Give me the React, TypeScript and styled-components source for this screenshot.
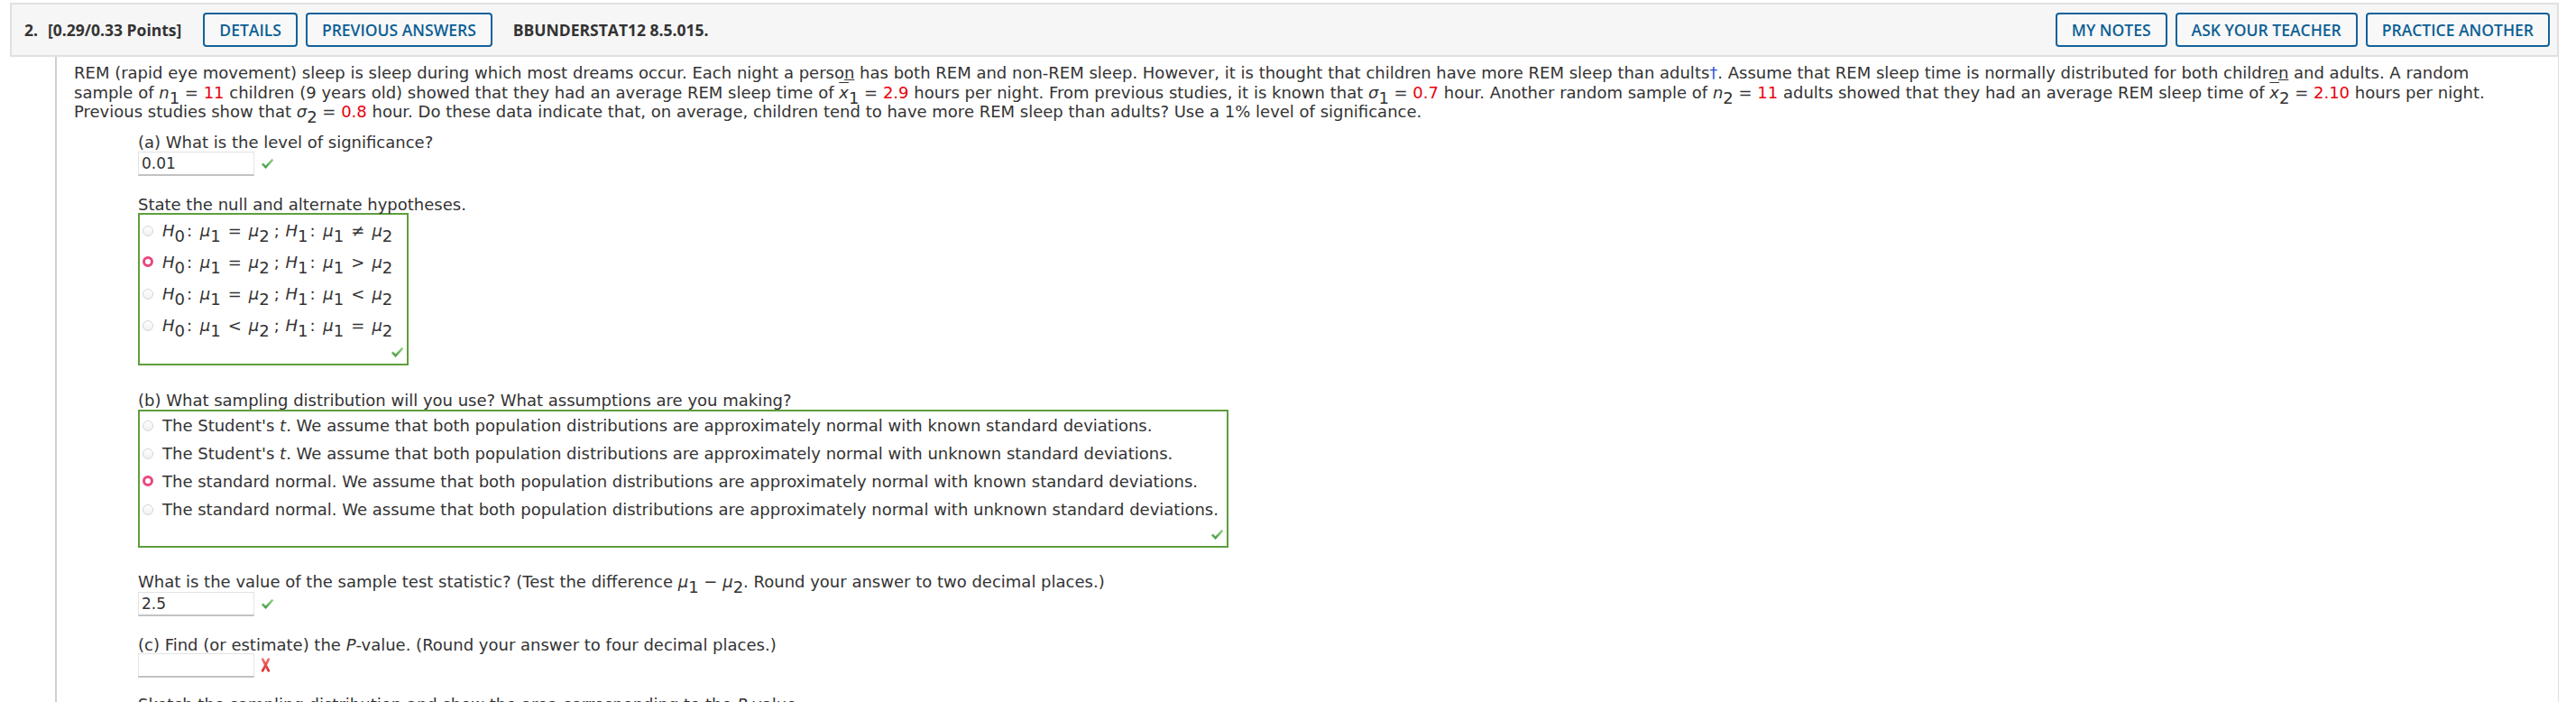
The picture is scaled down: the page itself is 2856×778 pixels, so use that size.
import React from 'react'
import styled, { createGlobalStyle, css } from 'styled-components'

const GlobalStyle = createGlobalStyle`
  html, body {
    margin: 0;
    padding: 0;
    background: #fff;
  }
  body {
    font-family: "DejaVu Sans", Verdana, sans-serif;
    font-size: 18px;
    color: #333;
  }
`

const Page = styled.div`
  box-sizing: border-box;
  height: 778px;
  overflow: hidden;
  padding: 3px 19px 0 11px;
`

const QuestionHeader = styled.div`
  display: flex;
  align-items: center;
  justify-content: space-between;
  box-sizing: border-box;
  height: 60px;
  padding: 0 8px 0 14px;
  background: #f6f6f6;
  border: 2px solid #e0e0e0;
  font-family: "Open Sans", "Liberation Sans", sans-serif;
`

const HeaderGroup = styled.div`
  display: flex;
  align-items: center;
  gap: 9px;
`

const QuestionTitle = styled.div`
  font-size: 17.5px;
  font-weight: 700;
  color: #333;
  margin-right: 15px;

  span {
    margin-left: 11px;
  }
`

const Code = styled.div`
  font-size: 17.5px;
  font-weight: 700;
  color: #333;
  margin-left: 14px;
`

const HeaderButton = styled.button`
  box-sizing: border-box;
  height: 38px;
  padding: 0 16px;
  border: 2px solid #13629a;
  border-radius: 4px;
  background: #f8f8f8;
  color: #0c5f95;
  font-family: "Open Sans", "Liberation Sans", sans-serif;
  font-size: 17.5px;
  font-weight: 600;
  cursor: pointer;
`

const QuestionBody = styled.div`
  margin-left: 50px;
  border-left: 2px solid #cfcfcf;
  border-right: 1px solid #dedede;
  padding: 7px 40px 40px 19px;
`

const Prompt = styled.p`
  margin: 0;
  line-height: 21.5px;
`

const Red = styled.span`
  color: #e8000b;
`

const Dagger = styled.span`
  color: #2b55d6;
`

const I = styled.i`
  font-style: italic;
`

const Sub = styled.span`
  font-style: normal;
  vertical-align: -0.35em;
  line-height: 0;
`

const Bar = styled.i`
  font-style: italic;
  text-decoration: overline;
  text-decoration-thickness: 1px;
`

const Op = styled.span`
  margin: 0 0.45em;
`

const Colon = styled.span`
  margin: 0 0.48em 0 0.11em;
`

const Semi = styled.span`
  margin: 0 0.38em 0 0.27em;
`

const Part = styled.div`
  margin-left: 71px;
`

const Label = styled.div<{ $mt: number }>`
  margin-top: ${(p) => p.$mt}px;
  line-height: 18px;
`

const AnswerRow = styled.div<{ $mt: number }>`
  display: flex;
  align-items: center;
  gap: 7px;
  margin-top: ${(p) => p.$mt}px;
`

const AnswerInput = styled.input`
  box-sizing: border-box;
  width: 129px;
  height: 27px;
  margin: 0;
  padding: 0 3px;
  border: 1px solid #e3e3e3;
  border-bottom: 2px solid #c2c2c2;
  background: #fff;
  font-family: "DejaVu Sans", Verdana, sans-serif;
  font-size: 17px;
  color: #333;
  outline: none;
`

const ChoiceBox = styled.div<{ $width: number; $mt?: number }>`
  box-sizing: border-box;
  width: ${(p) => p.$width}px;
  margin-top: ${(p) => p.$mt ?? 0}px;
  border: 2px solid #5e9e3e;
  padding: 0 3px;
`

const Choice = styled.div<{ $h: number }>`
  display: flex;
  align-items: center;
  gap: 10px;
  height: ${(p) => p.$h}px;
  white-space: nowrap;
`

const Radio = styled.span<{ $checked?: boolean }>`
  flex: none;
  box-sizing: border-box;
  width: 12px;
  height: 12px;
  border-radius: 50%;
  ${(p) =>
    p.$checked
      ? css`
          background: #fff;
          border: 3.5px solid #e8487f;
        `
      : css`
          border: 1px solid #d6d6d6;
          background: linear-gradient(#fff, #f0f0f0);
          margin-top: 2px;
        `}
`

const MarkRow = styled.div`
  display: flex;
  justify-content: flex-end;
  align-items: center;
  height: 25px;
`

const CheckMark = () => (
  <svg width="15" height="13" viewBox="0 0 15 13">
    <defs>
      <linearGradient id="ck" x1="0" y1="0" x2="0" y2="1">
        <stop offset="0" stopColor="#9ad88a" />
        <stop offset="1" stopColor="#3c973c" />
      </linearGradient>
    </defs>
    <path d="M0.8 7.2 L2.8 5.4 L5.6 8.3 L12.6 0.8 L14.3 2.5 L5.6 12 Z" fill="url(#ck)" />
  </svg>
)

const CrossMark = () => (
  <svg width="11" height="16" viewBox="0 0 11 16">
    <defs>
      <linearGradient id="cx" x1="0" y1="0" x2="0" y2="1">
        <stop offset="0" stopColor="#f27272" />
        <stop offset="1" stopColor="#dc2c2c" />
      </linearGradient>
    </defs>
    <path d="M2.2 1.6 L8.8 14.4 M8.8 1.6 L2.2 14.4" stroke="url(#cx)" strokeWidth="2.7" strokeLinecap="round" />
  </svg>
)

const Hyp = ({ h0, h1 }: { h0: string; h1: string }) => (
  <span>
    <I>H</I>
    <Sub>0</Sub>
    <Colon>:</Colon>
    <I>μ</I>
    <Sub>1</Sub>
    <Op>{h0}</Op>
    <I>μ</I>
    <Sub>2</Sub>
    <Semi>;</Semi>
    <I>H</I>
    <Sub>1</Sub>
    <Colon>:</Colon>
    <I>μ</I>
    <Sub>1</Sub>
    <Op>{h1}</Op>
    <I>μ</I>
    <Sub>2</Sub>
  </span>
)

const hypotheses = [
  { h0: '=', h1: '≠', checked: false },
  { h0: '=', h1: '>', checked: true },
  { h0: '=', h1: '<', checked: false },
  { h0: '<', h1: '=', checked: false },
]

const distributions = [
  { name: <>The Student's <I>t</I></>, sd: 'known', checked: false },
  { name: <>The Student's <I>t</I></>, sd: 'unknown', checked: false },
  { name: <>The standard normal</>, sd: 'known', checked: true },
  { name: <>The standard normal</>, sd: 'unknown', checked: false },
]

export default function App() {
  return (
    <Page>
      <GlobalStyle />
      <QuestionHeader>
        <HeaderGroup>
          <QuestionTitle>
            2.<span>[0.29/0.33 Points]</span>
          </QuestionTitle>
          <HeaderButton>DETAILS</HeaderButton>
          <HeaderButton>PREVIOUS ANSWERS</HeaderButton>
          <Code>BBUNDERSTAT12 8.5.015.</Code>
        </HeaderGroup>
        <HeaderGroup>
          <HeaderButton>MY NOTES</HeaderButton>
          <HeaderButton>ASK YOUR TEACHER</HeaderButton>
          <HeaderButton>PRACTICE ANOTHER</HeaderButton>
        </HeaderGroup>
      </QuestionHeader>

      <QuestionBody>
        <Prompt>
          REM (rapid eye movement) sleep is sleep during which most dreams occur. Each night a perso<u>n</u> has
          both REM and non-REM sleep. However, it is thought that children have more REM sleep than adults
          <Dagger>†</Dagger>. Assume that REM sleep time is normally distributed for both childre<u>n</u> and
          adults. A random sample of <I>n</I>
          <Sub>1</Sub> = <Red>11</Red> children (9 years old) showed that they had an average REM sleep time of{' '}
          <Bar>x</Bar>
          <Sub>1</Sub> = <Red>2.9</Red> hours per night. From previous studies, it is known that <I>σ</I>
          <Sub>1</Sub> = <Red>0.7</Red> hour. Another random sample of <I>n</I>
          <Sub>2</Sub> = <Red>11</Red> adults showed that they had an average REM sleep time of <Bar>x</Bar>
          <Sub>2</Sub> = <Red>2.10</Red> hours per night. Previous studies show that <I>σ</I>
          <Sub>2</Sub> = <Red>0.8</Red> hour. Do these data indicate that, on average, children tend to have more
          REM sleep than adults? Use a 1% level of significance.
        </Prompt>

        <Part>
          <Label $mt={14}>(a) What is the level of significance?</Label>
          <AnswerRow $mt={1}>
            <AnswerInput readOnly value="0.01" />
            <CheckMark />
          </AnswerRow>

          <Label $mt={23}>State the null and alternate hypotheses.</Label>
          <ChoiceBox $width={300}>
            {hypotheses.map((h, i) => (
              <Choice key={i} $h={35}>
                <Radio $checked={h.checked} />
                <Hyp h0={h.h0} h1={h.h1} />
              </Choice>
            ))}
            <MarkRow>
              <CheckMark />
            </MarkRow>
          </ChoiceBox>

          <Label $mt={30}>(b) What sampling distribution will you use? What assumptions are you making?</Label>
          <ChoiceBox $width={1209} $mt={1}>
            {distributions.map((d, i) => (
              <Choice key={i} $h={31}>
                <Radio $checked={d.checked} />
                <span>
                  {d.name}. We assume that both population distributions are approximately normal with {d.sd}{' '}
                  standard deviations.
                </span>
              </Choice>
            ))}
            <MarkRow>
              <CheckMark />
            </MarkRow>
          </ChoiceBox>

          <Label $mt={29}>
            What is the value of the sample test statistic? (Test the difference <I>μ</I>
            <Sub>1</Sub> − <I>μ</I>
            <Sub>2</Sub>. Round your answer to two decimal places.)
          </Label>
          <AnswerRow $mt={2}>
            <AnswerInput readOnly value="2.5" />
            <CheckMark />
          </AnswerRow>

          <Label $mt={23}>
            (c) Find (or estimate) the <I>P</I>-value. (Round your answer to four decimal places.)
          </Label>
          <AnswerRow $mt={0}>
            <AnswerInput readOnly value="" />
            <CrossMark />
          </AnswerRow>

          <Label $mt={21}>
            Sketch the sampling distribution and show the area corresponding to the <I>P</I>-value.
          </Label>
        </Part>
      </QuestionBody>
    </Page>
  )
}
